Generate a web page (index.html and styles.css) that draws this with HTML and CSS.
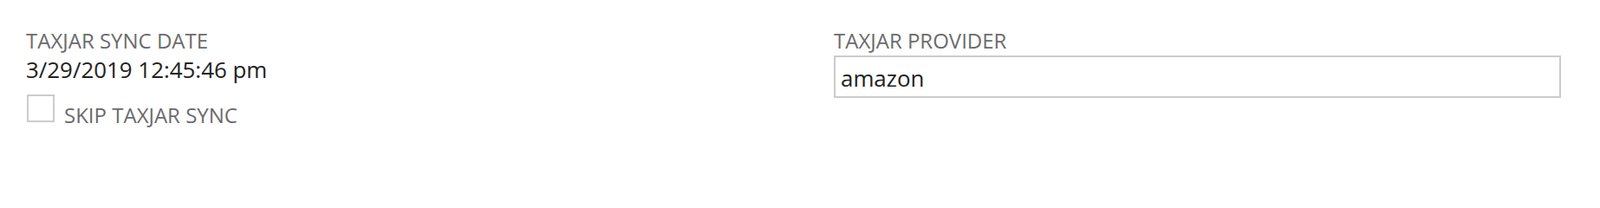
FILE: index.html
```html
<!DOCTYPE html>
<html lang="en">
<head>
<meta charset="utf-8">
<title>TaxJar</title>
<link rel="stylesheet" href="styles.css">
</head>
<body>
<div class="form">
  <div class="col col-left">
    <div class="label">TAXJAR SYNC DATE</div>
    <div class="value">3/29/2019 12:45:46 pm</div>
    <label class="check-row">
      <span class="checkbox"></span>
      <span class="check-label">SKIP TAXJAR SYNC</span>
    </label>
  </div>
  <div class="col col-right">
    <div class="label">TAXJAR PROVIDER</div>
    <input class="text-input" type="text" value="amazon" readonly>
  </div>
</div>
</body>
</html>
```
FILE: styles.css
```css
html, body {
  margin: 0;
  padding: 0;
  background: #ffffff;
}
body {
  font-family: "Open Sans", "Liberation Sans", sans-serif;
  width: 1846px;
  height: 200px;
  overflow: hidden;
}
.form {
  display: grid;
  grid-template-columns: 932px 839px;
  padding: 31px 0 0 30px;
}
.col {
  display: flex;
  flex-direction: column;
  align-items: flex-start;
}
.label {
  font-size: 24px;
  line-height: 32px;
  color: #6b6b6b;
  white-space: nowrap;
}
.value {
  font-size: 25.9px;
  line-height: 34px;
  color: #222222;
  white-space: nowrap;
}
.check-row {
  display: flex;
  align-items: flex-start;
  margin-top: 12px;
  gap: 11px;
}
.checkbox {
  width: 32px;
  height: 32px;
  box-sizing: border-box;
  border: 2px solid #cccccc;
  background: #ffffff;
  margin-left: 1px;
  flex: none;
}
.check-label {
  font-size: 24px;
  line-height: 32px;
  color: #6b6b6b;
  margin-top: 8px;
  white-space: nowrap;
}
.text-input {
  display: block;
  margin: 1px 0 0 0;
  width: 839px;
  height: 49px;
  box-sizing: border-box;
  border: 2px solid #cccccc;
  border-radius: 0;
  padding: 3px 6px 0 6px;
  font-family: "Open Sans", "Liberation Sans", sans-serif;
  font-size: 25.9px;
  color: #222222;
  background: #ffffff;
  outline: none;
}
```
